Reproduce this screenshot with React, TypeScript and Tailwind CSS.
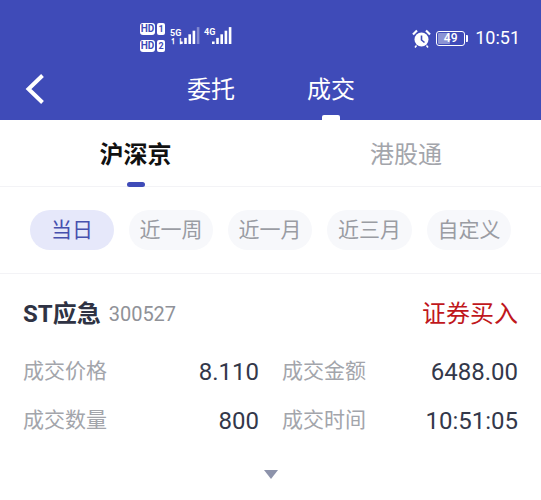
const FONT = "font-['Roboto','Noto_Sans_CJK_SC',sans-serif]";

const Bars = ({ dim = 0 }: { dim?: number }) => (
  <svg width="23" height="20" viewBox="0 0 23 20" fill="#fff">
    {[0, 1, 2, 3, 4].map((i) => (
      <rect
        key={i}
        x={2 + i * 4.2}
        y={16.5 - i * 3.6}
        width="2.6"
        height={2.5 + i * 3.6}
        opacity={i >= 5 - dim ? 0.35 : 1}
      />
    ))}
  </svg>
);

const HdBadge = ({ n }: { n: string }) => (
  <div className="flex items-center gap-[2px] h-[12px]">
    <span className="bg-white text-[#3f4bb8] rounded-[3px] w-[15px] text-center text-[10px] leading-[12px] font-bold">HD</span>
    <span className="bg-white text-[#3f4bb8] rounded-[2px] w-[8px] text-center text-[9px] leading-[12px] font-bold">{n}</span>
  </div>
);

const StatusBar = () => (
  <div className="h-[60px] flex text-white relative">
    <div className="ml-[140px] mt-[23px] flex h-[30px] gap-[5px]">
      <div className="flex flex-col gap-[5px]">
        <HdBadge n="1" />
        <HdBadge n="2" />
      </div>
      <div className="flex">
        <div className="flex flex-col items-start mt-[5px]">
          <span className="text-[9px] leading-[10px] font-bold">5G</span>
          <span className="text-[8px] leading-[8px] font-bold">↿⇂</span>
        </div>
        <div className="-ml-[6px] mt-[2px]"><Bars dim={1} /></div>
      </div>
      <div className="flex relative -ml-[2px]">
        <span className="text-[9px] leading-[10px] font-bold mt-[4px]">4G</span>
        <div className="-ml-[5px] mt-[2px]"><Bars /></div>
      </div>
    </div>
    <div className="ml-auto mr-[21px] mt-[28px] flex items-center h-[20px]">
      <svg width="19" height="19" viewBox="0 0 19 19" className="mr-[5px]">
        <circle cx="9.5" cy="10.5" r="7" fill="#fff" />
        <path d="M9.5 6.5V11L12.5 13.5" stroke="#3f4bb8" strokeWidth="1.6" fill="none" />
        <path d="M1 5.5L5 1.5M18 5.5L14 1.5" stroke="#fff" strokeWidth="2.2" />
        <path d="M4.5 16.5L3 18.5M14.5 16.5L16 18.5" stroke="#fff" strokeWidth="1.5" />
      </svg>
      <div className="relative w-[29px] h-[15px] border border-white rounded-[3px] p-[1px] mr-[1px]">
        <div className="w-[47%] h-full bg-white/40 rounded-[1px]" />
        <span className="absolute inset-0 text-center text-[12px] leading-[13px] font-medium">49</span>
      </div>
      <div className="w-[2px] h-[7px] bg-white rounded-r-[1px] mr-[7px]" />
      <span className="text-[18px] leading-[20px]">10:51</span>
    </div>
  </div>
);

const Header = () => (
  <div className="bg-[#3f4bb8]">
    <StatusBar />
    <div className="h-[60px] flex relative text-white">
      <svg width="20" height="32" viewBox="0 0 20 32" className="ml-[25px] mt-[13px]" fill="none">
        <path d="M17.5 2.5L3.5 16L17.5 29.5" stroke="#fff" strokeWidth="4" />
      </svg>
      <div className="ml-[142px] mt-[15px] text-[24px] leading-[30px] w-[48px]">委托</div>
      <div className="ml-[72px] mt-[15px] text-[24px] leading-[30px] w-[48px] relative">
        成交
        <div className="absolute left-[15px] top-[40px] w-[18px] h-[5px] bg-white rounded-t-[2px]" />
      </div>
    </div>
  </div>
);

const Market = () => (
  <div className="h-[67px] flex border-b border-[#f3f3f6]">
    <div className="w-[271px] flex flex-col items-center relative">
      <span className="mt-[18px] text-[24px] leading-[34px] font-bold text-[#111111]">沪深京</span>
      <div className="absolute top-[62px] left-[127px] w-[18px] h-[5px] bg-[#3f4bb8] rounded-full" />
    </div>
    <div className="flex-1 flex justify-center">
      <span className="mt-[18px] text-[24px] leading-[34px] text-[#a3a5ab]">港股通</span>
    </div>
  </div>
);

const ranges = [
  { label: "当日", w: "w-[84px]", active: true },
  { label: "近一周", w: "w-[84px]" },
  { label: "近一月", w: "w-[84px]" },
  { label: "近三月", w: "w-[85px]" },
  { label: "自定义", w: "w-[84px]" },
];

const Filters = () => (
  <div className="h-[87px] flex gap-[15px] pl-[30px] pt-[23px] border-b border-[#f3f3f6] whitespace-nowrap">
    {ranges.map((r) => (
      <div
        key={r.label}
        className={`${r.w} h-[40px] pt-[2px] rounded-full flex items-center justify-center text-[21px] ${
          r.active ? "bg-[#e6e8fa] text-[#4650ae]" : "bg-[#f7f8fb] text-[#9a9ca3]"
        }`}
      >
        {r.label}
      </div>
    ))}
  </div>
);

const Cell = ({ label, value, w }: { label: string; value: string; w: string }) => (
  <div className={`${w} flex justify-between items-center`}>
    <span className="text-[21px] leading-[30px] text-[#a3a5ab]">{label}</span>
    <span className="pt-[2px] text-[24px] leading-[30px] text-[#33384a]">{value}</span>
  </div>
);

const Trade = () => (
  <div className="px-[23px] pt-[23px]">
    <div className="flex items-center h-[34px]">
      <span className="text-[24px] leading-[34px] font-bold text-[#2f3344]">ST应急</span>
      <span className="ml-[8px] text-[20px] leading-[34px] text-[#909298]">300527</span>
      <span className="ml-auto text-[24px] leading-[34px] text-[#c0171c]">证券买入</span>
    </div>
    <div className="mt-[24px] flex flex-col gap-[17px]">
      <div className="flex gap-[23px]">
        <Cell label="成交价格" value="8.110" w="w-[236px]" />
        <Cell label="成交金额" value="6488.00" w="w-[236px]" />
      </div>
      <div className="flex gap-[23px]">
        <Cell label="成交数量" value="800" w="w-[236px]" />
        <Cell label="成交时间" value="10:51:05" w="w-[236px]" />
      </div>
    </div>
    <div className="mt-[34px] flex justify-center">
      <div className="w-0 h-0 border-x-[7px] border-x-transparent border-t-[9px] border-t-[#8d93ab]" />
    </div>
  </div>
);

export default function App() {
  return (
    <div className={`w-[541px] h-[500px] overflow-hidden bg-white ${FONT}`}>
      <Header />
      <Market />
      <Filters />
      <Trade />
    </div>
  );
}
